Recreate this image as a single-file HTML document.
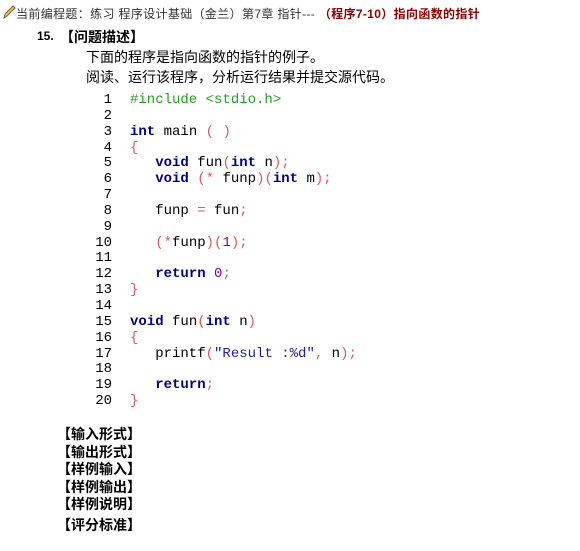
<!DOCTYPE html>
<html><head><meta charset="utf-8"><style>
body{margin:0;width:580px;height:551px;background:#fff;position:relative;overflow:hidden;font-family:"Liberation Sans","Noto Sans CJK SC",sans-serif;color:#000}
.a{position:absolute;white-space:pre}
.c{font-family:"Liberation Mono",monospace;font-size:14px;line-height:15.85px}
.n{width:24px;text-align:right;left:88px}
.k{color:#000080;font-weight:bold}
.p{color:#d85a5a}
.g{color:#2a9a2a}
.s{color:#2020a0}
.m{color:#8000a0}
.lb{font-size:14px;font-weight:bold;left:57px}
</style></head><body>
<svg class="a" style="left:2px;top:4px" width="14" height="16" viewBox="0 0 14 16"><path d="M2 14 L3 10 L11 2 L13 4 L5 12 Z" fill="#e8c070" stroke="#806030" stroke-width="1"/></svg>
<div class="a" style="left:16px;top:5px;font-size:12px;color:#333;letter-spacing:0.35px">当前编程题：练习 程序设计基础（金兰）第7章 指针--- <b style="color:#8b0000">（程序7-10）指向函数的指针</b></div>
<div class="a" style="left:37px;top:29px;font-size:12px;font-weight:bold">15.</div>
<div class="a" style="left:60px;top:27px;font-size:14px;font-weight:bold">【问题描述】</div>
<div class="a" style="left:86px;top:47px;font-size:14px">下面的程序是指向函数的指针的例子。</div>
<div class="a" style="left:86px;top:67px;font-size:14px">阅读、运行该程序，分析运行结果并提交源代码。</div>

<div class="a c n" style="top:93px">1
2
3
4
5
6
7
8
9
10
11
12
13
14
15
16
17
18
19
20</div>
<div class="a c" style="left:130px;top:93px"><span class="g">#include &lt;stdio.h&gt;</span>

<span class="k">int</span> main <span class="p">( )</span>
<span class="p">{</span>
   <span class="k">void</span> fun<span class="p">(</span><span class="k">int</span> n<span class="p">);</span>
   <span class="k">void</span> <span class="p">(*</span> funp<span class="p">)(</span><span class="k">int</span> m<span class="p">);</span>

   funp <span class="p">=</span> fun<span class="p">;</span>

   <span class="p">(*</span>funp<span class="p">)(</span><span class="m">1</span><span class="p">);</span>

   <span class="k">return</span> <span class="m">0</span><span class="p">;</span>
<span class="p">}</span>

<span class="k">void</span> fun<span class="p">(</span><span class="k">int</span> n<span class="p">)</span>
<span class="p">{</span>
   printf<span class="p">(</span><span class="s">"Result :%d"</span><span class="p">,</span> n<span class="p">);</span>

   <span class="k">return</span><span class="p">;</span>
<span class="p">}</span></div>

<div class="a lb" style="top:424px">【输入形式】</div>
<div class="a lb" style="top:442px">【输出形式】</div>
<div class="a lb" style="top:459px">【样例输入】</div>
<div class="a lb" style="top:477px">【样例输出】</div>
<div class="a lb" style="top:494px">【样例说明】</div>
<div class="a lb" style="top:515px">【评分标准】</div>
</body></html>
